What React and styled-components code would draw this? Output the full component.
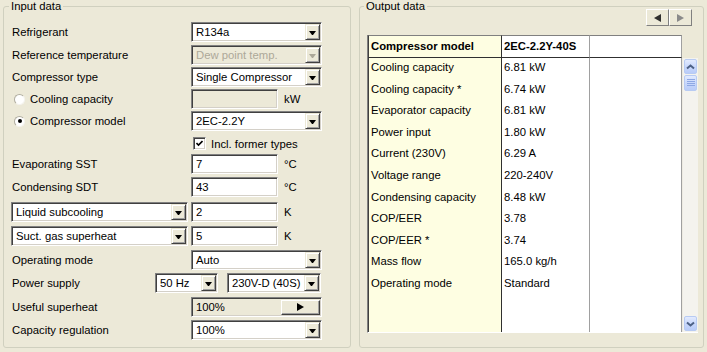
import React from "react";
import styled, { createGlobalStyle } from "styled-components";

const GlobalStyle = createGlobalStyle`
  html, body {
    margin: 0;
    padding: 0;
  }
  body {
    width: 707px;
    height: 352px;
    overflow: hidden;
    background: #ece9d8;
    font-family: "Liberation Sans", Arial, sans-serif;
    font-size: 11.3px;
    color: #000;
  }
`;

const Screen = styled.div`
  display: flex;
  gap: 8px;
  padding-left: 3px;
  height: 352px;
`;

const GroupBox = styled.fieldset`
  margin: 0;
  min-width: 0;
  box-sizing: border-box;
  width: ${(p) => p.$w}px;
  height: 348px;
  padding: ${(p) => p.$pad};
  border: 1px solid #d0d0bf;
  border-radius: 3px;
`;

const Legend = styled.legend`
  margin-left: -3px;
  padding: 0 2px;
  line-height: 13px;
`;

const Form = styled.div`
  display: flex;
  flex-direction: column;
`;

const Row = styled.div`
  display: flex;
  align-items: ${(p) => (p.$center ? "center" : "flex-start")};
  height: ${(p) => p.$h}px;
  flex-shrink: 0;
`;

const Label = styled.span`
  width: ${(p) => p.$w || 179}px;
  flex-shrink: 0;
  display: flex;
  align-items: center;
  line-height: 20px;
  white-space: nowrap;
`;

const Slot = styled.div`
  width: 179px;
  flex-shrink: 0;
  margin-left: -1px;
  margin-right: 1px;
`;

const Field = styled.div`
  width: ${(p) => p.$w}px;
  height: 20px;
  box-sizing: border-box;
  flex-shrink: 0;
  display: flex;
  align-items: center;
  padding: 0 1px 0 4px;
  margin-left: ${(p) => p.$ml || 0}px;
  border: 1px solid;
  border-color: #808080 #ffffff #ffffff #808080;
  box-shadow: inset 1px 1px 0 #404040, inset -1px -1px 0 #d4d0c8;
  background: ${(p) => (p.$grey ? "#ece9d8" : "#ffffff")};
  color: ${(p) => (p.$disabled ? "#aca899" : "#000")};
  white-space: nowrap;
  overflow: hidden;
`;

const FieldText = styled.span`
  flex: 1;
  overflow: hidden;
`;

const DropButton = styled.span`
  width: 15px;
  height: 16px;
  box-sizing: border-box;
  flex-shrink: 0;
  display: flex;
  align-items: center;
  justify-content: center;
  background: #ece9d8;
  border: 1px solid;
  border-color: #ece9d8 #404040 #404040 #ece9d8;
  box-shadow: inset 1px 1px 0 #ffffff, inset -1px -1px 0 #a0a0a0;

  &::after {
    content: "";
    width: 1px;
    height: 0;
    border-left: 3px solid transparent;
    border-right: 3px solid transparent;
    border-top: 4px solid ${(p) => (p.$disabled ? "#aca899" : "#000")};
    margin-top: 1px;
  }
`;

const StepButton = styled.span`
  width: 39px;
  height: 15px;
  box-sizing: border-box;
  flex-shrink: 0;
  display: flex;
  align-items: center;
  justify-content: center;
  background: #ece9d8;
  border: 1px solid;
  border-color: #ffffff #404040 #404040 #ffffff;
  box-shadow: inset -1px -1px 0 #a0a0a0;

  &::after {
    content: "";
    border-top: 4px solid transparent;
    border-bottom: 4px solid transparent;
    border-left: 7px solid #000;
  }
`;

const Unit = styled.span`
  margin-left: 6px;
  line-height: 20px;
`;

const Radio = styled.span`
  width: 11px;
  height: 11px;
  box-sizing: border-box;
  margin: 0 5px 0 2px;
  border-radius: 50%;
  border: 1px solid;
  border-color: #b0ada0 #f4f3ee #f4f3ee #b0ada0;
  background: #fff;
  display: flex;
  align-items: center;
  justify-content: center;

  &::after {
    content: "";
    width: 4px;
    height: 4px;
    border-radius: 50%;
    background: ${(p) => (p.$checked ? "#000" : "transparent")};
  }
`;

const CheckRow = styled.label`
  display: flex;
  align-items: center;
  margin-left: 181px;
  gap: 5px;
`;

const CheckBox = styled.span`
  width: 13px;
  height: 13px;
  box-sizing: border-box;
  border: 1px solid;
  border-color: #808080 #ffffff #ffffff #808080;
  box-shadow: inset 1px 1px 0 #404040, inset -1px -1px 0 #d4d0c8;
  background: #fff;
  display: flex;
  align-items: center;
  justify-content: center;
`;

const Combo = ({ w, value, disabled, ml }) => (
  <Field $w={w} $ml={ml} $grey={disabled} $disabled={disabled}>
    <FieldText>{value}</FieldText>
    <DropButton $disabled={disabled} />
  </Field>
);

/* right side */

const NavBar = styled.div`
  display: flex;
  justify-content: flex-end;
  margin: -4px 6px 9px 0;
`;

const NavButton = styled.span`
  width: 23px;
  height: 17px;
  box-sizing: border-box;
  display: flex;
  align-items: center;
  justify-content: center;
  background: #ece9d8;
  border: 1px solid;
  border-color: #ffffff #808080 #808080 #ffffff;

  &::after {
    content: "";
    border-top: 4px solid transparent;
    border-bottom: 4px solid transparent;
    ${(p) =>
      p.$dir === "left"
        ? "border-right: 7px solid #303030;"
        : "border-left: 7px solid #8a8a8a;"}
  }
`;

const Frame = styled.div`
  width: 331px;
  height: 298px;
  box-sizing: border-box;
  display: flex;
  flex-direction: column;
  border-left: 1px solid #808080;
  border-bottom: 1px solid #ffffff;
`;

const Head = styled.div`
  display: flex;
  height: 23px;
  flex-shrink: 0;
`;

const HeadCell = styled.div`
  width: ${(p) => p.$w}px;
  box-sizing: border-box;
  flex-shrink: 0;
  padding-left: 2px;
  line-height: 21px;
  font-weight: 700;
  background: ${(p) => p.$bg};
  border-top: 1px solid #808080;
  border-bottom: 1px solid #303030;
  border-right: 1px solid ${(p) => p.$line};
  border-left: ${(p) => (p.$first ? "1px solid #404040" : "none")};
  white-space: nowrap;
`;

const Corner = styled.div`
  flex: 1;
`;

const Body = styled.div`
  flex: 1;
  display: flex;
  min-height: 0;
`;

const Column = styled.div`
  width: ${(p) => p.$w}px;
  box-sizing: border-box;
  flex-shrink: 0;
  background: ${(p) => p.$bg};
  border-right: 1px solid ${(p) => p.$line};
  border-left: ${(p) => (p.$first ? "1px solid #404040" : "none")};
`;

const Cell = styled.div`
  height: 21.6px;
  line-height: 18px;
  padding-left: 2px;
  white-space: nowrap;
  overflow: hidden;
`;

const ScrollBar = styled.div`
  width: 17px;
  box-sizing: border-box;
  display: flex;
  flex-direction: column;
  gap: 1px;
  padding: 1px 1px 1px 1px;
  background: #f4f3ee;
  border-left: 1px solid #edebe2;
`;

const ScrollPart = styled.div`
  height: ${(p) => p.$h}px;
  box-sizing: border-box;
  flex-shrink: 0;
  border-radius: 2px;
  border: 1px solid #b8cbf3;
  background: linear-gradient(180deg, #e3ebfe 0%, #c9d8fc 50%, #b9ccf8 100%);
  display: flex;
  align-items: center;
  justify-content: center;
  margin-top: ${(p) => (p.$bottom ? "auto" : "0")};
`;

const Chevron = ({ down }) => (
  <svg width="9" height="6" viewBox="0 0 9 6">
    <polyline
      points={down ? "1,1.5 4.5,4.5 8,1.5" : "1,4.5 4.5,1.5 8,4.5"}
      fill="none"
      stroke="#4d6185"
      strokeWidth="2"
    />
  </svg>
);

const Grip = () => (
  <svg width="8" height="8" viewBox="0 0 8 8">
    {[1, 3, 5, 7].map((y) => (
      <line key={y} x1="0" y1={y - 0.5} x2="8" y2={y - 0.5} stroke="#8ea8e4" strokeWidth="1" />
    ))}
  </svg>
);

const output = [
  ["Cooling capacity", "6.81 kW"],
  ["Cooling capacity *", "6.74 kW"],
  ["Evaporator capacity", "6.81 kW"],
  ["Power input", "1.80 kW"],
  ["Current (230V)", "6.29 A"],
  ["Voltage range", "220-240V"],
  ["Condensing capacity", "8.48 kW"],
  ["COP/EER", "3.78"],
  ["COP/EER *", "3.74"],
  ["Mass flow", "165.0 kg/h"],
  ["Operating mode", "Standard"],
];

export default function App() {
  return (
    <>
      <GlobalStyle />
      <Screen>
        <GroupBox $w={348} $pad="9px 0 0 8px">
          <Legend>Input data</Legend>
          <Form>
            <Row $h={23}>
              <Label>Refrigerant</Label>
              <Combo w={131} value="R134a" />
            </Row>
            <Row $h={22}>
              <Label>Reference temperature</Label>
              <Combo w={131} value="Dew point temp." disabled />
            </Row>
            <Row $h={22}>
              <Label>Compressor type</Label>
              <Combo w={131} value="Single Compressor" />
            </Row>
            <Row $h={22}>
              <Label>
                <Radio />
                Cooling capacity
              </Label>
              <Field $w={87} $grey />
              <Unit>kW</Unit>
            </Row>
            <Row $h={22}>
              <Label>
                <Radio $checked />
                Compressor model
              </Label>
              <Combo w={131} value="2EC-2.2Y" />
            </Row>
            <Row $h={21} $center>
              <CheckRow>
                <CheckBox>
                  <svg width="7" height="7" viewBox="0 0 7 7">
                    <polyline points="0.5,3 2.5,5 6.5,1" fill="none" stroke="#000" strokeWidth="1.6" />
                  </svg>
                </CheckBox>
                Incl. former types
              </CheckRow>
            </Row>
            <Row $h={23}>
              <Label>Evaporating SST</Label>
              <Field $w={87}>7</Field>
              <Unit>°C</Unit>
            </Row>
            <Row $h={25}>
              <Label>Condensing SDT</Label>
              <Field $w={87}>43</Field>
              <Unit>°C</Unit>
            </Row>
            <Row $h={24}>
              <Slot>
                <Combo w={177} value="Liquid subcooling" />
              </Slot>
              <Field $w={87}>2</Field>
              <Unit>K</Unit>
            </Row>
            <Row $h={24}>
              <Slot>
                <Combo w={177} value="Suct. gas superheat" />
              </Slot>
              <Field $w={87}>5</Field>
              <Unit>K</Unit>
            </Row>
            <Row $h={23}>
              <Label>Operating mode</Label>
              <Combo w={131} value="Auto" />
            </Row>
            <Row $h={24}>
              <Label $w={143}>Power supply</Label>
              <Combo w={63} value="50 Hz" />
              <Combo w={94} value="230V-D (40S)" ml={9} />
            </Row>
            <Row $h={23}>
              <Label>Useful superheat</Label>
              <Field $w={131} $grey>
                <FieldText>100%</FieldText>
                <StepButton />
              </Field>
            </Row>
            <Row $h={22}>
              <Label>Capacity regulation</Label>
              <Combo w={131} value="100%" />
            </Row>
          </Form>
        </GroupBox>

        <GroupBox $w={345} $pad="0 5px 0 7px">
          <Legend>Output data</Legend>
          <NavBar>
            <NavButton $dir="left" />
            <NavButton $dir="right" />
          </NavBar>
          <Frame>
            <Head>
              <HeadCell $w={134} $bg="#fefee2" $line="#303030" $first>
                Compressor model
              </HeadCell>
              <HeadCell $w={88} $bg="#fff" $line="#a0a0a0">
                2EC-2.2Y-40S
              </HeadCell>
              <HeadCell $w={92} $bg="#fff" $line="#a0a0a0" />
              <Corner />
            </Head>
            <Body>
              <Column $w={134} $bg="#fefee2" $line="#303030" $first>
                {output.map(([name]) => (
                  <Cell key={name}>{name}</Cell>
                ))}
              </Column>
              <Column $w={88} $bg="#fff" $line="#a0a0a0">
                {output.map(([name, value]) => (
                  <Cell key={name}>{value}</Cell>
                ))}
              </Column>
              <Column $w={92} $bg="#fff" $line="#a0a0a0" />
              <ScrollBar>
                <ScrollPart $h={15}>
                  <Chevron />
                </ScrollPart>
                <ScrollPart $h={16}>
                  <Grip />
                </ScrollPart>
                <ScrollPart $h={15} $bottom>
                  <Chevron down />
                </ScrollPart>
              </ScrollBar>
            </Body>
          </Frame>
        </GroupBox>
      </Screen>
    </>
  );
}
